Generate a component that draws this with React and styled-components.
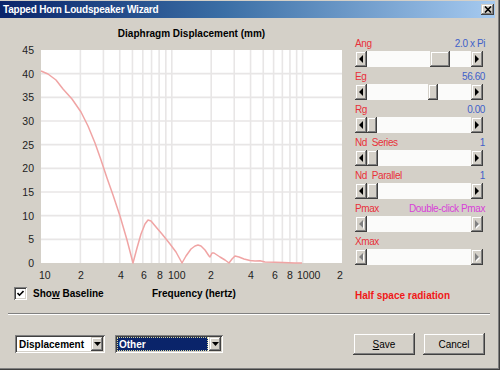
import React from "react";
import styled, { createGlobalStyle } from "styled-components";

const FACE = "#d4d0c8";

const GlobalStyle = createGlobalStyle`
  html, body {
    margin: 0;
    padding: 0;
    background: ${FACE};
  }
  body {
    font-family: "Liberation Sans", Arial, sans-serif;
  }
`;

const raised = `
  box-shadow: inset -1px -1px #404040, inset 1px 1px ${FACE},
    inset -2px -2px #808080, inset 2px 2px #ffffff;
`;

const sunken = `
  box-shadow: inset 1px 1px #808080, inset -1px -1px #ffffff,
    inset 2px 2px #404040, inset -2px -2px ${FACE};
`;

const Window = styled.div`
  width: 500px;
  height: 370px;
  box-sizing: border-box;
  background: ${FACE};
  padding: 1px 4px 0 0;
  border-right: 1px solid #404040;
  border-bottom: 1px solid #404040;
  box-shadow: inset -1px -1px #808080;
  display: flex;
  flex-direction: column;
  overflow: hidden;
`;

const TitleBar = styled.div`
  height: 17px;
  flex-shrink: 0;
  display: flex;
  align-items: center;
  justify-content: space-between;
  padding-left: 3px;
  background: linear-gradient(90deg, #0a246a 0%, #3a6ea5 45%, #a6caf0 100%);
`;

const TitleText = styled.span`
  color: #fff;
  font-weight: bold;
  font-size: 10px;
  letter-spacing: -0.2px;
`;

const CloseButton = styled.div`
  width: 13px;
  height: 11px;
  margin-right: 1px;
  background: ${FACE};
  display: flex;
  align-items: center;
  justify-content: center;
  ${raised}
`;

const Main = styled.div`
  height: 293px;
  display: flex;
`;

const ChartColumn = styled.div`
  width: 352px;
  display: flex;
  flex-direction: column;
`;

const ChartTitle = styled.div`
  margin: 9px 0 0 41px;
  width: 301px;
  text-align: center;
  font-weight: bold;
  font-size: 10px;
  line-height: 14px;
  color: #000;
`;

const Plot = styled.svg`
  display: block;
  margin-top: 3px;
  width: 352px;
  height: 240px;
`;

const CheckRow = styled.div`
  height: 18px;
  display: grid;
  grid-template-columns: 138px auto;
  align-items: center;
  padding-left: 14px;
`;

const CheckField = styled.label`
  display: flex;
  align-items: center;
  gap: 6px;
  font-weight: bold;
  font-size: 10px;
  color: #000;
`;

const CheckBox = styled.span`
  width: 13px;
  height: 13px;
  box-sizing: border-box;
  background: #fff;
  display: flex;
  align-items: center;
  justify-content: center;
  ${sunken}
`;

const AxisCaption = styled.span`
  font-weight: bold;
  font-size: 10px;
  color: #000;
`;

const SidePanel = styled.div`
  width: 130px;
  margin-left: 3px;
  padding-top: 19px;
  display: flex;
  flex-direction: column;
  gap: 3px;
`;

const Group = styled.div`
  display: flex;
  flex-direction: column;
  gap: 1px;
`;

const GroupHead = styled.div`
  height: 13px;
  display: flex;
  justify-content: space-between;
  align-items: center;
  font-size: 10px;
  letter-spacing: -0.4px;
  white-space: pre;
`;

const ParamName = styled.span`
  color: #e8303a;
`;

const ParamValue = styled.span`
  color: ${(p) => p.$color || "#4060c8"};
`;

const Track = styled.div`
  width: 128px;
  height: 16px;
  display: flex;
  background: #fbfbfa;
`;

const ArrowButton = styled.div`
  width: 12px;
  height: 16px;
  flex-shrink: 0;
  background: ${FACE};
  display: flex;
  align-items: center;
  justify-content: center;
  ${raised}
`;

const Thumb = styled.div`
  height: 16px;
  flex-shrink: 0;
  background: ${FACE};
  ${raised}
`;

const TrackFill = styled.div`
  flex: 1;
`;

const Note = styled.div`
  margin-top: 21px;
  font-weight: bold;
  font-size: 10px;
  line-height: 13px;
  color: #f01818;
`;

const Separator = styled.div`
  margin: 2px 5px 0 8px;
  border-top: 1px solid #808080;
  border-bottom: 1px solid #ffffff;
`;

const BottomRow = styled.div`
  margin-top: 18px;
  height: 22px;
  display: flex;
  align-items: center;
  padding: 0 10px 0 15px;
`;

const Combo = styled.div`
  width: ${(p) => p.$width}px;
  height: 18px;
  box-sizing: border-box;
  padding: 2px;
  margin-right: 10px;
  background: #fff;
  display: flex;
  ${sunken}
`;

const ComboField = styled.div`
  flex: 1;
  display: flex;
  align-items: center;
  padding-left: 2px;
  font-weight: bold;
  font-size: 10px;
  color: ${(p) => (p.$selected ? "#fff" : "#000")};
  background: ${(p) => (p.$selected ? "#0a246a" : "transparent")};
  outline: ${(p) => (p.$selected ? "1px dotted #d8d8a0" : "none")};
  outline-offset: -1px;
  margin-right: 1px;
`;

const ComboButton = styled.div`
  width: 12px;
  background: ${FACE};
  display: flex;
  align-items: center;
  justify-content: center;
  ${raised}
`;

const PushButton = styled.div`
  width: 62px;
  height: 22px;
  box-sizing: border-box;
  margin-left: ${(p) => (p.$first ? "auto" : "8px")};
  background: ${FACE};
  display: flex;
  align-items: center;
  justify-content: center;
  font-size: 10px;
  color: #000;
  ${raised}
`;

// plot geometry (svg coordinates)
const PX = 41;
const PY = 6;
const PW = 301;
const PH = 213;
const DECADE = PW / Math.log10(200);
const fx = (f) => PX + Math.log10(f / 10) * DECADE;
const fy = (v) => PY + PH - (v / 45) * PH;

const gridFreqs = [
  20, 30, 40, 50, 60, 70, 80, 90, 100, 200, 300, 400, 500, 600, 700, 800,
  900, 1000,
];
const yTicks = [0, 5, 10, 15, 20, 25, 30, 35, 40, 45];
const xLabels = [
  ["10", 39],
  ["2", 78],
  ["4", 118],
  ["6", 141],
  ["8", 157],
  ["100", 168],
  ["2", 208],
  ["4", 248],
  ["6", 272],
  ["8", 287],
  ["1000", 297],
  ["2", 337],
];

// curve traced in page pixels
const curve = [
  [41, 71], [48, 74], [56, 80], [63, 89], [72, 99], [81, 112], [88, 126],
  [95, 143], [101, 160], [107, 178], [113, 195], [120, 216], [127, 240],
  [133, 263], [137, 248], [141, 234], [145, 224], [148, 220], [151, 221],
  [156, 227], [162, 234], [170, 244], [176, 252], [182, 263], [186, 256],
  [191, 249], [195, 246], [198, 245], [201, 246], [205, 250], [209, 256],
  [210, 257], [212, 253], [214, 253], [220, 257], [225, 260], [229, 263],
  [232, 259], [235, 256], [239, 257], [244, 259], [250, 260.5], [255, 261],
  [260, 260.8], [265, 262], [275, 262.3], [283, 262.5], [295, 263],
  [302, 263],
];

const params = [
  { name: "Ang", value: "2.0 x Pi", thumb: [63, 20] },
  { name: "Eg", value: "56.60", thumb: [61, 10] },
  { name: "Rg", value: "0.00", thumb: [0, 10] },
  { name: "Nd  Series", value: "1", thumb: [0, 11] },
  { name: "Nd  Parallel", value: "1", thumb: [0, 11] },
  { name: "Pmax", value: "Double-click Pmax", color: "#d840d8" },
  { name: "Xmax" },
];

function Arrow({ dir, disabled }) {
  const pts = dir === "left" ? "4,0 4,8 0,4" : "0,0 0,8 4,4";
  return (
    <svg width="5" height="9" viewBox="0 0 5 9">
      {disabled && (
        <polygon points={pts} fill="#fff" transform="translate(1,1)" />
      )}
      <polygon points={pts} fill={disabled ? "#808080" : "#000"} />
    </svg>
  );
}

function DownArrow() {
  return (
    <svg width="7" height="4" viewBox="0 0 7 4">
      <polygon points="0,0 7,0 3.5,4" fill="#000" />
    </svg>
  );
}

function ScrollBar({ thumb }) {
  const disabled = !thumb;
  return (
    <Track>
      <ArrowButton>
        <Arrow dir="left" disabled={disabled} />
      </ArrowButton>
      {thumb && <TrackFill style={{ flex: `0 0 ${thumb[0]}px` }} />}
      {thumb && <Thumb style={{ width: thumb[1] }} />}
      <TrackFill />
      <ArrowButton>
        <Arrow dir="right" disabled={disabled} />
      </ArrowButton>
    </Track>
  );
}

function Chart() {
  const pts = curve.map(([x, y]) => `${x},${y - 44}`).join(" ");
  return (
    <Plot viewBox="0 0 352 240">
      <rect x={PX} y={PY} width={PW} height={PH} fill="#fff" />
      <g stroke="#e8e6e6" strokeWidth="1.6">
        {gridFreqs.map((f) => (
          <line key={f} x1={fx(f)} x2={fx(f)} y1={PY} y2={PY + PH} />
        ))}
        {yTicks.slice(1, -1).map((v) => (
          <line key={v} x1={PX} x2={PX + PW} y1={fy(v)} y2={fy(v)} />
        ))}
      </g>
      <polyline
        points={pts}
        fill="none"
        stroke="#f0a4a4"
        strokeWidth="1.5"
        strokeLinejoin="round"
      />
      <g
        fontFamily="'Liberation Sans', Arial, sans-serif"
        fontSize="10.5"
        fill="#222"
      >
        {yTicks.map((v) => (
          <text key={v} x="34" y={fy(v) + 4} textAnchor="end">
            {v}
          </text>
        ))}
        {xLabels.map(([t, x], i) => (
          <text key={i} x={x} y="235">
            {t}
          </text>
        ))}
      </g>
    </Plot>
  );
}

export default function App() {
  return (
    <>
      <GlobalStyle />
      <Window>
        <TitleBar>
          <TitleText>Tapped Horn Loudspeaker Wizard</TitleText>
          <CloseButton>
            <svg width="8" height="7" viewBox="0 0 8 7">
              <path
                d="M1 0.5 L7 6.5 M7 0.5 L1 6.5"
                stroke="#000"
                strokeWidth="1.6"
              />
            </svg>
          </CloseButton>
        </TitleBar>
        <Main>
          <ChartColumn>
            <ChartTitle>Diaphragm Displacement (mm)</ChartTitle>
            <Chart />
            <CheckRow>
              <CheckField>
                <CheckBox>
                  <svg width="7" height="7" viewBox="0 0 7 7">
                    <path
                      d="M0.5 3 L2.5 5.2 L6.5 1"
                      stroke="#000"
                      strokeWidth="1.6"
                      fill="none"
                    />
                  </svg>
                </CheckBox>
                <span>
                  Sho<u>w</u> Baseline
                </span>
              </CheckField>
              <AxisCaption>Frequency (hertz)</AxisCaption>
            </CheckRow>
          </ChartColumn>
          <SidePanel>
            {params.map((p) => (
              <Group key={p.name}>
                <GroupHead>
                  <ParamName>{p.name}</ParamName>
                  {p.value && (
                    <ParamValue $color={p.color}>{p.value}</ParamValue>
                  )}
                </GroupHead>
                <ScrollBar thumb={p.thumb} />
              </Group>
            ))}
            <Note>Half space radiation</Note>
          </SidePanel>
        </Main>
        <Separator />
        <BottomRow>
          <Combo $width={90}>
            <ComboField>Displacement</ComboField>
            <ComboButton>
              <DownArrow />
            </ComboButton>
          </Combo>
          <Combo $width={108}>
            <ComboField $selected>Other</ComboField>
            <ComboButton>
              <DownArrow />
            </ComboButton>
          </Combo>
          <PushButton $first>
            <span>
              <u>S</u>ave
            </span>
          </PushButton>
          <PushButton>Cancel</PushButton>
        </BottomRow>
      </Window>
    </>
  );
}
